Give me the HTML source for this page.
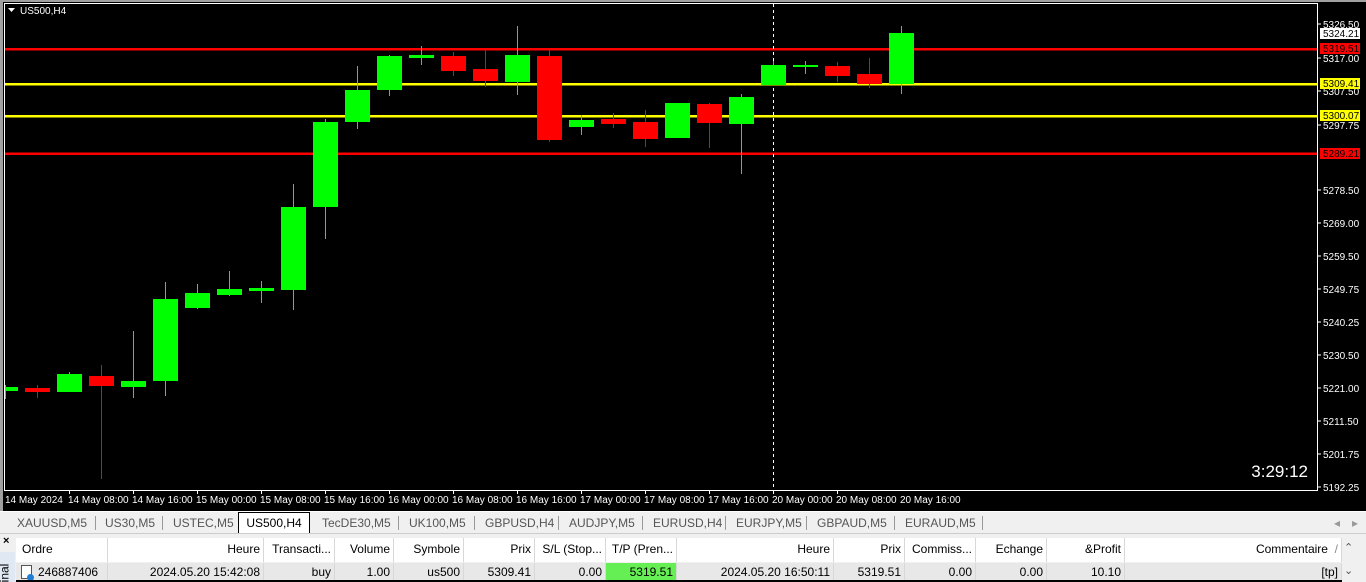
<!DOCTYPE html>
<html><head><meta charset="utf-8"><style>
*{margin:0;padding:0;box-sizing:border-box}
body{width:1366px;height:582px;overflow:hidden;background:#f0f0f0;font-family:"Liberation Sans",sans-serif;position:relative}
#chart{position:absolute;left:0;top:0}
.tabs{position:absolute;left:0;top:511px;width:1366px;height:22px;background:#f0f0f0;border-top:1px solid #fff;font-size:12px;color:#555}
.tab{position:absolute;top:4px}
.sep{position:absolute;top:4px;width:1px;height:14px;background:#999}
.act{position:absolute;left:238px;top:0;width:72px;height:21px;background:#fff;border:1px solid #000;border-bottom:none;color:#000;text-align:center;padding-top:3px}
.term{position:absolute;left:0;top:533px;width:1366px;height:49px;background:#f0f0f0;border-top:1px solid #ccc}
.hd,.rw{position:absolute;left:16px;height:24px;font-size:12px;color:#000}
.hd{top:538px;background:#fff}
.rw{top:563px;height:17px;background:#e8e8e8}
.c{position:absolute;top:0;height:100%;padding:4px 3px 0;text-align:right;border-right:1px solid #d8d8d8;white-space:nowrap}
.rw .c{padding-top:2px}
</style></head><body>
<svg id="chart" width="1366" height="511" xmlns="http://www.w3.org/2000/svg" font-family="Liberation Sans, sans-serif">
<rect x="0" y="0" width="1366" height="511" fill="#000"/>
<rect x="0" y="0" width="3" height="511" fill="#a0a0a0"/>
<rect x="0" y="0" width="1366" height="2" fill="#a0a0a0"/>
<rect x="4.5" y="3.5" width="1313" height="487" fill="none" stroke="#fff" stroke-width="1"/>
<g shape-rendering="crispEdges">
<rect x="5" y="48" width="1312" height="2.5" fill="#f00"/>
<rect x="5" y="83" width="1312" height="2.5" fill="#ff0"/>
<rect x="5" y="115" width="1312" height="2.5" fill="#ff0"/>
<rect x="5" y="152.5" width="1312" height="2.5" fill="#f00"/>
<line x1="773.5" y1="4" x2="773.5" y2="490" stroke="#fff" stroke-dasharray="3,3"/>
<!-- candles -->
<g fill="#00ff00" stroke="none">
<rect x="5" y="385" width="1" height="14"/><rect x="5" y="387" width="13" height="4"/>
<rect x="69" y="372" width="1" height="20"/><rect x="57" y="374" width="25" height="18"/>
<rect x="133" y="331" width="1" height="67"/><rect x="121" y="381" width="25" height="6"/>
<rect x="165" y="282" width="1" height="114"/><rect x="153" y="299" width="25" height="82"/>
<rect x="197" y="284" width="1" height="25"/><rect x="185" y="293" width="25" height="15"/>
<rect x="229" y="271" width="1" height="25"/><rect x="217" y="289" width="25" height="6"/>
<rect x="261" y="281" width="1" height="22"/><rect x="249" y="288" width="25" height="3"/>
<rect x="293" y="184" width="1" height="126"/><rect x="281" y="207" width="25" height="83"/>
<rect x="325" y="119" width="1" height="120"/><rect x="313" y="122" width="25" height="85"/>
<rect x="357" y="66" width="1" height="63"/><rect x="345" y="90" width="25" height="32"/>
<rect x="389" y="55" width="1" height="41"/><rect x="377" y="56" width="25" height="34"/>
<rect x="421" y="46" width="1" height="19"/><rect x="409" y="55" width="25" height="3"/>
<rect x="517" y="26" width="1" height="69"/><rect x="505" y="55" width="25" height="27"/>
<rect x="581" y="115" width="1" height="20"/><rect x="569" y="120" width="25" height="7"/>
<rect x="677" y="103" width="1" height="35"/><rect x="665" y="103" width="25" height="35"/>
<rect x="741" y="94" width="1" height="80"/><rect x="729" y="97" width="25" height="27"/>
<rect x="773" y="61" width="1" height="24"/><rect x="761" y="65" width="25" height="20"/>
<rect x="805" y="61" width="1" height="13"/><rect x="793" y="65" width="25" height="2"/>
<rect x="901" y="26" width="1" height="68"/><rect x="889" y="33" width="25" height="51"/>
</g>
<g fill="#ff0000">
<rect x="37" y="385" width="1" height="13"/><rect x="25" y="388" width="25" height="4"/>
<rect x="101" y="365" width="1" height="114"/><rect x="89" y="376" width="25" height="10"/>
<rect x="453" y="52" width="1" height="24"/><rect x="441" y="56" width="25" height="15"/>
<rect x="485" y="50" width="1" height="37"/><rect x="473" y="69" width="25" height="12"/>
<rect x="549" y="50" width="1" height="92"/><rect x="537" y="56" width="25" height="84"/>
<rect x="613" y="113" width="1" height="15"/><rect x="601" y="119" width="25" height="5"/>
<rect x="645" y="110" width="1" height="37"/><rect x="633" y="122" width="25" height="17"/>
<rect x="709" y="103" width="1" height="45"/><rect x="697" y="104" width="25" height="19"/>
<rect x="837" y="62" width="1" height="20"/><rect x="825" y="66" width="25" height="10"/>
<rect x="869" y="58" width="1" height="30"/><rect x="857" y="74" width="25" height="10"/>
</g>
</g>
<path d="M8 8 L15 8 L11.5 12 Z" fill="#fff"/>
<text x="20" y="14" fill="#fff" font-size="10">US500,H4</text>
<text x="1308" y="477" fill="#fff" font-size="17" text-anchor="end">3:29:12</text>
<g fill="#fff" font-size="10">
<g stroke="#fff" shape-rendering="crispEdges">
<line x1="1318" y1="24" x2="1321" y2="24"/><line x1="1318" y1="58" x2="1321" y2="58"/><line x1="1318" y1="91" x2="1321" y2="91"/><line x1="1318" y1="125" x2="1321" y2="125"/><line x1="1318" y1="190" x2="1321" y2="190"/><line x1="1318" y1="223" x2="1321" y2="223"/><line x1="1318" y1="256" x2="1321" y2="256"/><line x1="1318" y1="289" x2="1321" y2="289"/><line x1="1318" y1="322" x2="1321" y2="322"/><line x1="1318" y1="355" x2="1321" y2="355"/><line x1="1318" y1="388" x2="1321" y2="388"/><line x1="1318" y1="421" x2="1321" y2="421"/><line x1="1318" y1="454" x2="1321" y2="454"/><line x1="1318" y1="487" x2="1321" y2="487"/>
</g>
<text x="1323" y="28">5326.50</text><text x="1323" y="62">5317.00</text><text x="1323" y="95">5307.50</text><text x="1323" y="129">5297.75</text><text x="1323" y="194">5278.50</text><text x="1323" y="227">5269.00</text><text x="1323" y="260">5259.50</text><text x="1323" y="293">5249.75</text><text x="1323" y="326">5240.25</text><text x="1323" y="359">5230.50</text><text x="1323" y="392">5221.00</text><text x="1323" y="425">5211.50</text><text x="1323" y="458">5201.75</text><text x="1323" y="491">5192.25</text>
</g>
<rect x="1320" y="28" width="40" height="11" fill="#fff"/><text x="1323" y="37" font-size="10" fill="#000">5324.21</text>
<rect x="1320" y="43" width="40" height="11" fill="#f00"/><text x="1323" y="52" font-size="10" fill="#000">5319.51</text>
<rect x="1320" y="78" width="40" height="11" fill="#ff0"/><text x="1323" y="87" font-size="10" fill="#000">5309.41</text>
<rect x="1320" y="110" width="40" height="11" fill="#ff0"/><text x="1323" y="119" font-size="10" fill="#000">5300.07</text>
<rect x="1320" y="148" width="40" height="11" fill="#f00"/><text x="1323" y="157" font-size="10" fill="#000">5289.21</text>
<g stroke="#fff" shape-rendering="crispEdges">
<line x1="69.5" y1="491" x2="69.5" y2="494"/><line x1="133.5" y1="491" x2="133.5" y2="494"/><line x1="197.5" y1="491" x2="197.5" y2="494"/><line x1="261.5" y1="491" x2="261.5" y2="494"/><line x1="325.5" y1="491" x2="325.5" y2="494"/><line x1="389.5" y1="491" x2="389.5" y2="494"/><line x1="453.5" y1="491" x2="453.5" y2="494"/><line x1="517.5" y1="491" x2="517.5" y2="494"/><line x1="581.5" y1="491" x2="581.5" y2="494"/><line x1="645.5" y1="491" x2="645.5" y2="494"/><line x1="709.5" y1="491" x2="709.5" y2="494"/><line x1="773.5" y1="491" x2="773.5" y2="494"/><line x1="837.5" y1="491" x2="837.5" y2="494"/>
</g>
<g fill="#fff" font-size="10">
<text x="5" y="503">14 May 2024</text><text x="68" y="503">14 May 08:00</text><text x="132" y="503">14 May 16:00</text><text x="196" y="503">15 May 00:00</text><text x="260" y="503">15 May 08:00</text><text x="324" y="503">15 May 16:00</text><text x="388" y="503">16 May 00:00</text><text x="452" y="503">16 May 08:00</text><text x="516" y="503">16 May 16:00</text><text x="580" y="503">17 May 00:00</text><text x="644" y="503">17 May 08:00</text><text x="708" y="503">17 May 16:00</text><text x="772" y="503">20 May 00:00</text><text x="836" y="503">20 May 08:00</text><text x="900" y="503">20 May 16:00</text>
</g>
</svg>
<div class="tabs">
<span class="tab" style="left:17px">XAUUSD,M5</span><span class="sep" style="left:95px"></span>
<span class="tab" style="left:105px">US30,M5</span><span class="sep" style="left:162px"></span>
<span class="tab" style="left:173px">USTEC,M5</span>
<div class="act">US500,H4</div>
<span class="tab" style="left:322px">TecDE30,M5</span><span class="sep" style="left:398px"></span>
<span class="tab" style="left:409px">UK100,M5</span><span class="sep" style="left:474px"></span>
<span class="tab" style="left:485px">GBPUSD,H4</span><span class="sep" style="left:558px"></span>
<span class="tab" style="left:569px">AUDJPY,M5</span><span class="sep" style="left:642px"></span>
<span class="tab" style="left:653px">EURUSD,H4</span><span class="sep" style="left:725px"></span>
<span class="tab" style="left:736px">EURJPY,M5</span><span class="sep" style="left:806px"></span>
<span class="tab" style="left:817px">GBPAUD,M5</span><span class="sep" style="left:894px"></span>
<span class="tab" style="left:905px">EURAUD,M5</span><span class="sep" style="left:982px"></span>
<span class="tab" style="left:1334px;color:#999">◂</span><span class="tab" style="left:1352px;color:#999">▸</span>
</div>
<div class="term"></div>
<div style="position:absolute;left:3px;top:535px;font-size:11px;font-weight:bold">×</div>
<div style="position:absolute;left:0;top:552px;width:15px;height:30px;background:#dfe8f3"></div>
<div style="position:absolute;left:-5px;top:566px;font-size:12px;transform:rotate(-90deg)">inal</div>
<div class="hd" style="width:1326px">
<div class="c" style="left:0;width:92px;text-align:left;padding-left:6px">Ordre</div>
<div class="c" style="left:92px;width:156px">Heure</div>
<div class="c" style="left:248px;width:71px">Transacti...</div>
<div class="c" style="left:319px;width:59px">Volume</div>
<div class="c" style="left:378px;width:70px">Symbole</div>
<div class="c" style="left:448px;width:71px">Prix</div>
<div class="c" style="left:519px;width:71px">S/L (Stop...</div>
<div class="c" style="left:590px;width:71px">T/P (Pren...</div>
<div class="c" style="left:661px;width:157px">Heure</div>
<div class="c" style="left:818px;width:71px">Prix</div>
<div class="c" style="left:889px;width:71px">Commiss...</div>
<div class="c" style="left:960px;width:71px">Echange</div>
<div class="c" style="left:1031px;width:78px">&amp;Profit</div>
<div class="c" style="left:1109px;width:217px">Commentaire &nbsp;<span style="color:#888">/</span></div>
</div>
<div class="rw" style="width:1326px">
<div class="c" style="left:0;width:92px;text-align:left;padding-left:22px">246887406</div>
<div class="c" style="left:92px;width:156px">2024.05.20 15:42:08</div>
<div class="c" style="left:248px;width:71px">buy</div>
<div class="c" style="left:319px;width:59px">1.00</div>
<div class="c" style="left:378px;width:70px">us500</div>
<div class="c" style="left:448px;width:71px">5309.41</div>
<div class="c" style="left:519px;width:71px">0.00</div>
<div class="c" style="left:590px;width:71px;background:#66ee55">5319.51</div>
<div class="c" style="left:661px;width:157px">2024.05.20 16:50:11</div>
<div class="c" style="left:818px;width:71px">5319.51</div>
<div class="c" style="left:889px;width:71px">0.00</div>
<div class="c" style="left:960px;width:71px">0.00</div>
<div class="c" style="left:1031px;width:78px">10.10</div>
<div class="c" style="left:1109px;width:217px">[tp]</div>
</div>
<div style="position:absolute;left:21px;top:565px;width:11px;height:14px;border:1px solid #555;background:#fff"></div>
<div style="position:absolute;left:27px;top:574px;width:7px;height:7px;border-radius:50%;background:#1e7fd6"></div>
<div style="position:absolute;left:1344px;top:541px;font-size:11px;color:#555">⌃</div>
<div style="position:absolute;left:1344px;top:564px;font-size:11px;color:#555">⌄</div>
<div style="position:absolute;left:16px;top:580px;width:1326px;height:2px;background:#000"></div>
</body></html>
